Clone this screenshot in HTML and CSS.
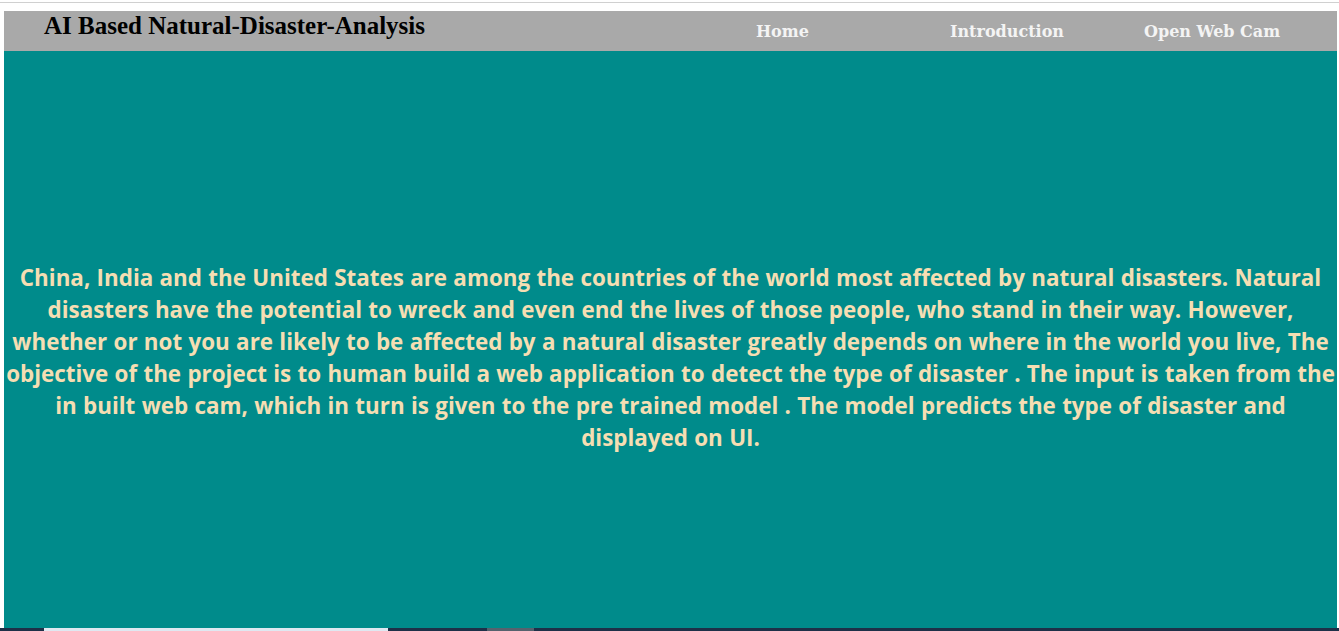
FILE: index.html
```html
<!DOCTYPE html>
<html>
<head>
<meta charset="utf-8">
<link rel="stylesheet" href="styles.css">
</head>
<body>
<div class="topline"></div>
<div class="page">
  <header class="navbar">
    <h1 class="brand">AI Based Natural-Disaster-Analysis</h1>
    <nav class="links">
      <a class="link link-home" href="#">Home</a>
      <a class="link link-intro" href="#">Introduction</a>
      <a class="link link-cam" href="#">Open Web Cam</a>
    </nav>
  </header>
  <section class="hero">
    <p class="intro">China, India and the United States are among the countries of the world most affected by natural disasters. Natural<br>disasters have the potential to wreck and even end the lives of those people, who stand in their way. However,<br>whether or not you are likely to be affected by a natural disaster greatly depends on where in the world you live, The<br>objective of the project is to human build a web application to detect the type of disaster . The input is taken from the<br>in built web cam, which in turn is given to the pre trained model . The model predicts the type of disaster and<br>displayed on UI.</p>
  </section>
</div>
<div class="bottombar">
  <span class="seg seg-dark1"></span>
  <span class="seg seg-light"></span>
  <span class="seg seg-dark2"></span>
  <span class="seg seg-gray"></span>
</div>
</body>
</html>
```

FILE: styles.css
```css
html, body {
  margin: 0;
  padding: 0;
  background: #ffffff;
  overflow: hidden;
}
.topline {
  height: 2px;
  border-bottom: 1px solid #d0d0d0;
}
.page {
  margin: 8px 2px 0 4px;
}
.navbar {
  height: 40px;
  background: #a9a9a9;
  display: flex;
  align-items: flex-start;
}
.brand {
  margin: 0 0 0 40px;
  padding-top: 1px;
  font-family: "Liberation Serif", "Times New Roman", serif;
  font-weight: bold;
  font-size: 25px;
  color: #000;
  width: 712px;
}
.links {
  display: flex;
  padding-top: 11px;
}
.link {
  font-family: "DejaVu Serif", serif;
  font-weight: bold;
  font-size: 16px;
  color: #f4f4f4;
  text-decoration: none;
}
.link-home { width: 194px; }
.link-intro { width: 194px; }
.hero {
  height: 577px;
  background: #008b8b;
  display: flex;
  align-items: flex-start;
  box-sizing: border-box;
}
.intro {
  margin: 211px 0 0 0;
  width: 100%;
  text-align: center;
  white-space: nowrap;
  font-family: "Open Sans", sans-serif;
  font-weight: bold;
  font-size: 22.4px;
  word-spacing: 0.5px;
  line-height: 32px;
  color: #f5deb3;
}
.bottombar {
  height: 4px;
  background: #1e3048;
  display: flex;
}
.seg { display: block; height: 100%; }
.seg-dark1 { width: 44px; }
.seg-light { width: 344px; background: #dfe8f1; }
.seg-dark2 { width: 99px; }
.seg-gray { width: 47px; background: #56626e; }
```
